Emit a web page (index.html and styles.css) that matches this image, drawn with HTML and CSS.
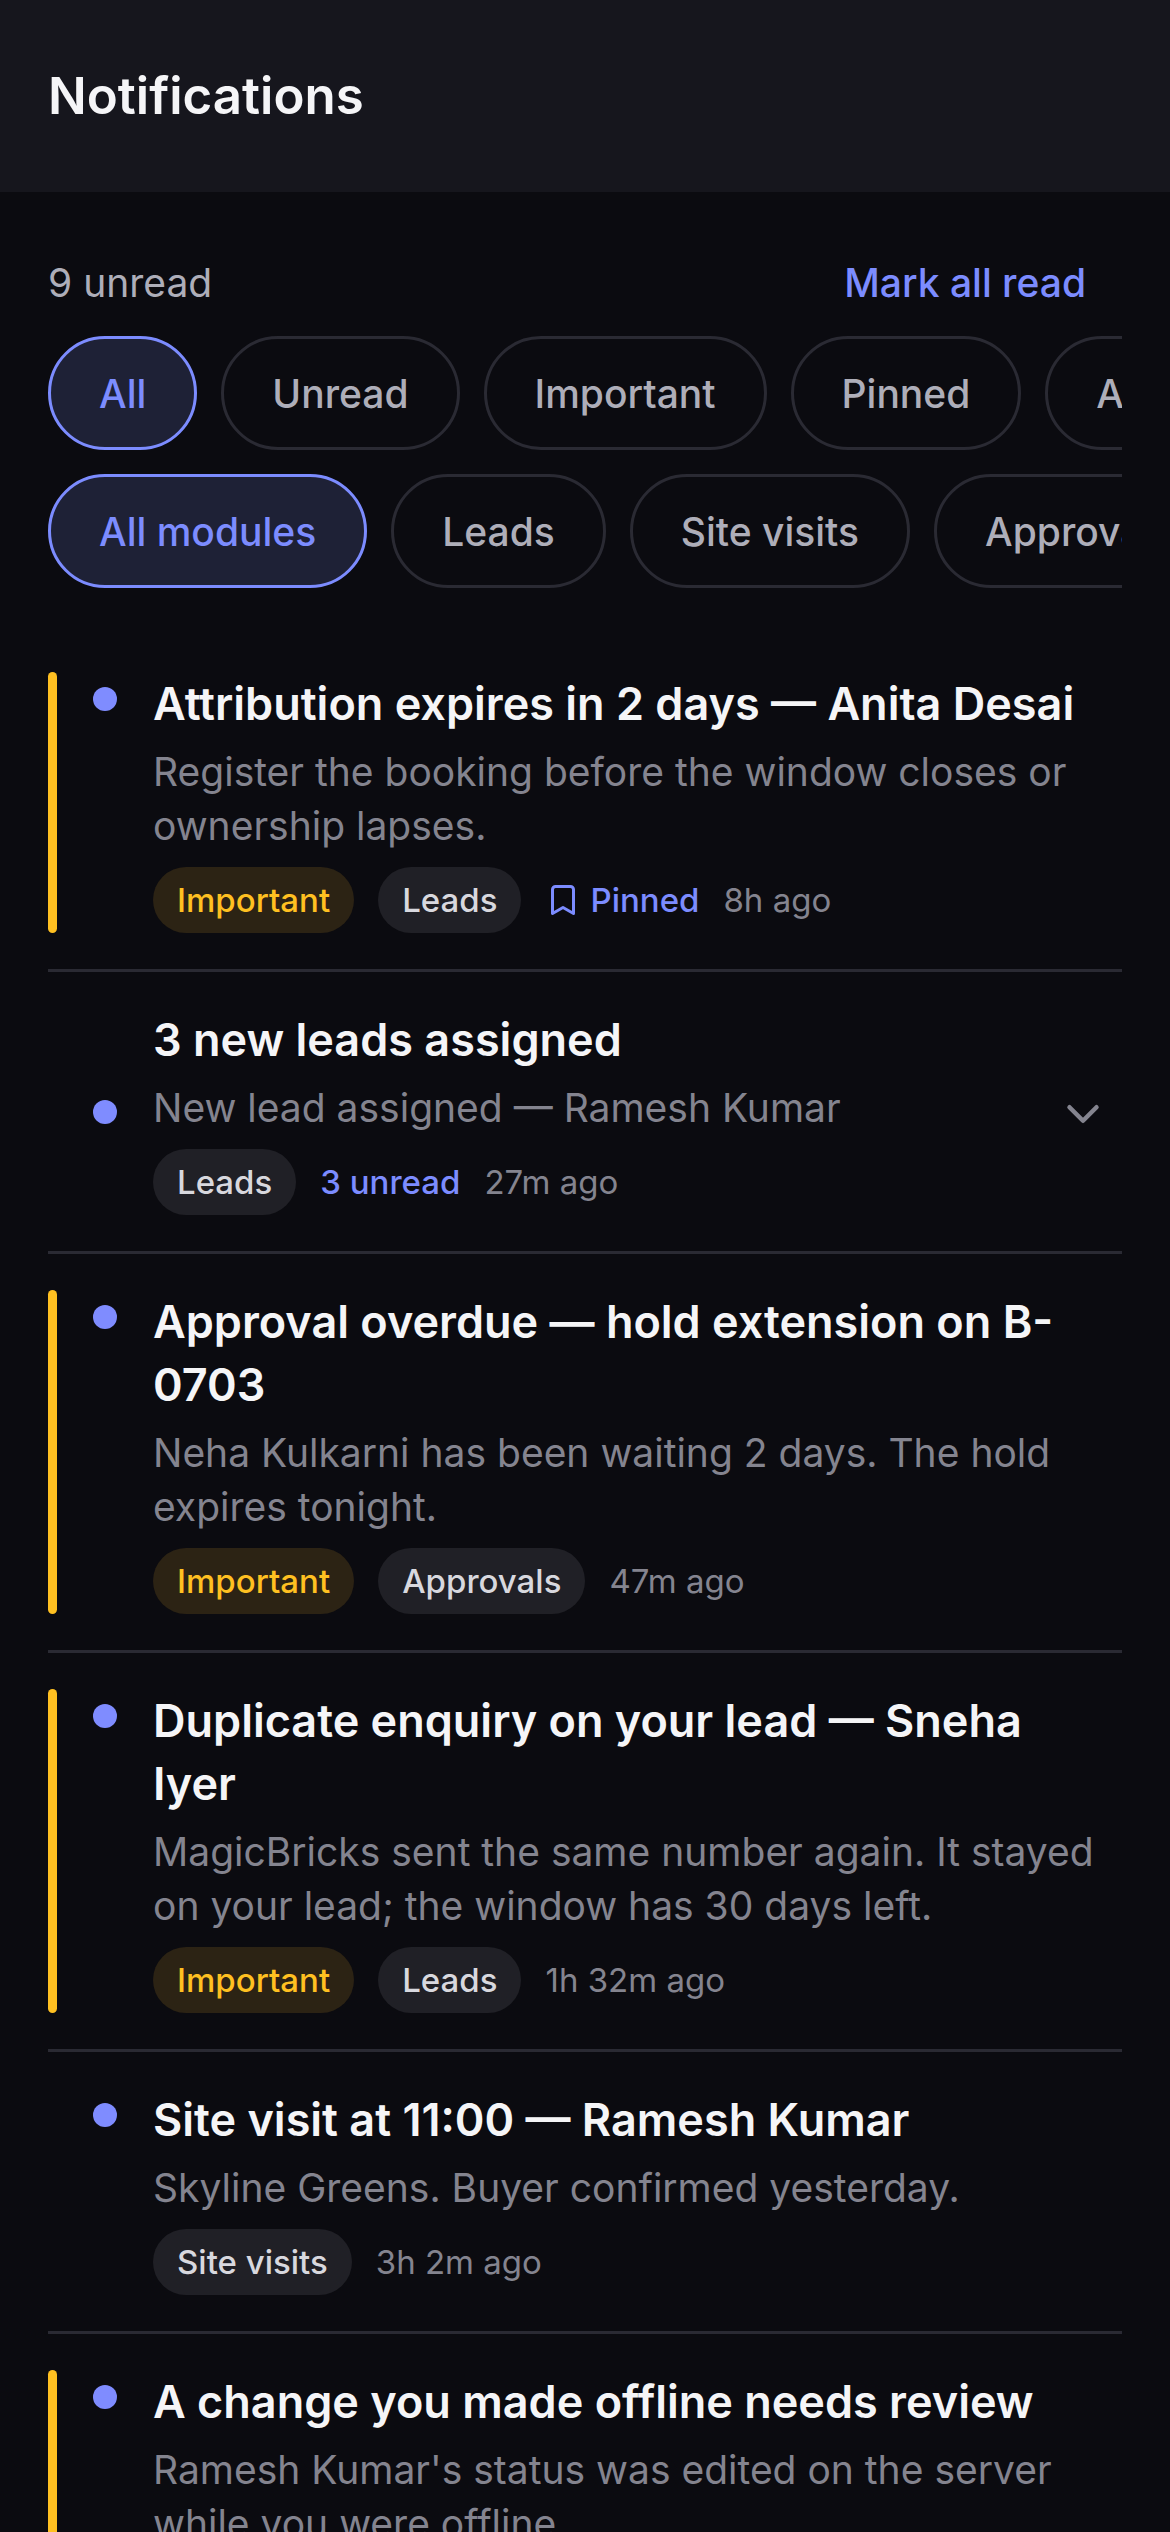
FILE: index.html
```html
<!DOCTYPE html>
<html lang="en">
<head>
<meta charset="utf-8">
<title>Notifications</title>
<link rel="stylesheet" href="styles.css">
</head>
<body>
<header class="app-header"><h1 class="app-title">Notifications</h1></header>
<main class="content">
  <div class="status-row">
    <span class="unread-count">9 unread</span>
    <button class="mark-read">Mark all read</button>
  </div>
  <div class="filters">
    <div class="chip-row">
      <span class="chip chip-active">All</span>
      <span class="chip">Unread</span>
      <span class="chip">Important</span>
      <span class="chip">Pinned</span>
      <span class="chip">Assigned</span>
    </div>
    <div class="chip-row">
      <span class="chip chip-active">All modules</span>
      <span class="chip">Leads</span>
      <span class="chip">Site visits</span>
      <span class="chip">Approvals</span>
    </div>
  </div>
  <ul class="list">
    <li class="item">
      <div class="bar bar-on"></div>
      <div class="dot"></div>
      <div class="body">
        <h2 class="title">Attribution expires in 2 days — Anita Desai</h2>
        <p class="sub">Register the booking before the window closes or ownership lapses.</p>
        <div class="meta">
          <span class="tag tag-important">Important</span>
          <span class="tag">Leads</span>
          <span class="pinned">
            <svg class="pin-icon" viewBox="0 0 24 24" fill="none" stroke="currentColor" stroke-width="2" stroke-linecap="round" stroke-linejoin="round"><path d="m19 21-7-4-7 4V5a2 2 0 0 1 2-2h10a2 2 0 0 1 2 2v16z"/></svg>
            Pinned
          </span>
          <span class="time">8h ago</span>
        </div>
      </div>
    </li>
    <li class="item item-group">
      <div class="bar"></div>
      <div class="dot"></div>
      <div class="body">
        <h2 class="title">3 new leads assigned</h2>
        <p class="sub">New lead assigned — Ramesh Kumar</p>
        <div class="meta">
          <span class="tag">Leads</span>
          <span class="group-count">3 unread</span>
          <span class="time">27m ago</span>
        </div>
      </div>
      <svg class="chevron" viewBox="0 0 24 24" fill="none" stroke="currentColor" stroke-width="2" stroke-linecap="round" stroke-linejoin="round"><path d="m6 9 6 6 6-6"/></svg>
    </li>
    <li class="item">
      <div class="bar bar-on"></div>
      <div class="dot"></div>
      <div class="body">
        <h2 class="title">Approval overdue — hold extension on B-0703</h2>
        <p class="sub">Neha Kulkarni has been waiting 2 days. The hold expires tonight.</p>
        <div class="meta">
          <span class="tag tag-important">Important</span>
          <span class="tag">Approvals</span>
          <span class="time">47m ago</span>
        </div>
      </div>
    </li>
    <li class="item">
      <div class="bar bar-on"></div>
      <div class="dot"></div>
      <div class="body">
        <h2 class="title">Duplicate enquiry on your lead — Sneha Iyer</h2>
        <p class="sub">MagicBricks sent the same number again. It stayed on your lead; the window has 30 days left.</p>
        <div class="meta">
          <span class="tag tag-important">Important</span>
          <span class="tag">Leads</span>
          <span class="time">1h 32m ago</span>
        </div>
      </div>
    </li>
    <li class="item">
      <div class="bar"></div>
      <div class="dot"></div>
      <div class="body">
        <h2 class="title">Site visit at 11:00 — Ramesh Kumar</h2>
        <p class="sub">Skyline Greens. Buyer confirmed yesterday.</p>
        <div class="meta">
          <span class="tag">Site visits</span>
          <span class="time">3h 2m ago</span>
        </div>
      </div>
    </li>
    <li class="item">
      <div class="bar bar-on"></div>
      <div class="dot"></div>
      <div class="body">
        <h2 class="title">A change you made offline needs review</h2>
        <p class="sub">Ramesh Kumar's status was edited on the server while you were offline.</p>
        <div class="meta">
          <span class="tag tag-important">Important</span>
          <span class="tag">Leads</span>
          <span class="time">4h ago</span>
        </div>
      </div>
    </li>
  </ul>
</main>
</body>
</html>
```
FILE: styles.css
```css
* { box-sizing: border-box; }
html, body { margin: 0; padding: 0; height: 2532px; overflow: hidden; }
body { background: #0b0b10; font-family: Inter, "Liberation Sans", sans-serif; color: #f5f5f7; }
.app-header { height: 192px; background: #16161d; display: flex; align-items: center; padding: 0 48px; }
.app-title { margin: 0; font-size: 51px; font-weight: 600; line-height: 1.2; color: #f5f5f7; }
.content { padding: 66px 48px 0; }
.status-row { display: flex; align-items: center; justify-content: space-between; height: 48px; margin-bottom: 30px; }
.unread-count { font-size: 39px; color: #aeaeb9; }
.mark-read { background: none; border: 0; padding: 0 36px; font: 500 39px Inter, sans-serif; color: #7c8cff; }
.filters { display: flex; flex-direction: column; gap: 24px; }
.chip-row { display: flex; gap: 24px; overflow: hidden; }
.chip { flex: none; height: 114px; padding: 0 48px; display: flex; align-items: center; border: 3px solid #2a2a33; border-radius: 57px; font-size: 39px; font-weight: 500; color: #aeaeb9; white-space: nowrap; }
.chip-active { background: #1e2136; border-color: #7c8cff; color: #7c8cff; }
.list { list-style: none; margin: 48px 0 0; padding: 0; }
.item { display: flex; align-items: stretch; padding: 36px 12px 36px 0; border-bottom: 3px solid #2a2a33; }
.bar { flex: none; width: 9px; border-radius: 5px; margin-right: 36px; }
.bar-on { background: #ffc021; }
.dot { flex: none; width: 24px; height: 24px; margin: 15px 36px 0 0; border-radius: 50%; background: #7f8cff; }
.item-group .dot { align-self: center; margin-top: 0; }
.body { flex: 1; min-width: 0; }
.title { margin: 0; font-size: 45px; font-weight: 600; line-height: 63px; color: #f5f5f7; }
.sub { margin: 10px 0 0; font-size: 39px; line-height: 54px; color: #84848f; }
.meta { display: flex; align-items: center; gap: 24px; margin-top: 14px; height: 66px; font-size: 33px; }
.tag { height: 66px; padding: 0 24px; display: flex; align-items: center; border-radius: 33px; background: #202026; color: #d8d8de; font-weight: 500; }
.tag-important { background: #2c2314; color: #ffc021; }
.pinned { display: flex; align-items: center; gap: 9px; color: #7c8cff; font-weight: 500; }
.pin-icon { width: 36px; height: 36px; }
.group-count { color: #7c8cff; font-weight: 500; }
.time { color: #84848f; }
.chevron { flex: none; align-self: center; width: 54px; height: 54px; margin-top: 5px; color: #84848f; }
```
